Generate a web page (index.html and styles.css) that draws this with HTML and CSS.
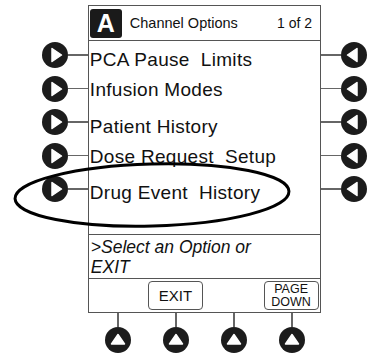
FILE: index.html
```html
<!DOCTYPE html>
<html lang="en">
<head>
    <meta charset="UTF-8">
    <title>Channel Options</title>
    <link rel="stylesheet" href="styles.css">
</head>
<body>
    <div class="device">
        <!-- linke Tasten -->
        <div class="side side-left">
            <div class="key"><svg class="btn" viewBox="0 0 26 26"><circle cx="13" cy="13" r="13"/><path d="M10 6.5 L19.5 13 L10 19.5 Z"/></svg><span class="stem"></span></div>
            <div class="key"><svg class="btn" viewBox="0 0 26 26"><circle cx="13" cy="13" r="13"/><path d="M10 6.5 L19.5 13 L10 19.5 Z"/></svg><span class="stem"></span></div>
            <div class="key"><svg class="btn" viewBox="0 0 26 26"><circle cx="13" cy="13" r="13"/><path d="M10 6.5 L19.5 13 L10 19.5 Z"/></svg><span class="stem"></span></div>
            <div class="key"><svg class="btn" viewBox="0 0 26 26"><circle cx="13" cy="13" r="13"/><path d="M10 6.5 L19.5 13 L10 19.5 Z"/></svg><span class="stem"></span></div>
            <div class="key"><svg class="btn" viewBox="0 0 26 26"><circle cx="13" cy="13" r="13"/><path d="M10 6.5 L19.5 13 L10 19.5 Z"/></svg><span class="stem"></span></div>
        </div>

        <!-- Display -->
        <div class="screen">
            <div class="header">
                <span class="badge">A</span>
                <span class="title">Channel Options</span>
                <span class="page">1 of 2</span>
            </div>
            <div class="menu">
                <div class="item">PCA Pause&nbsp; Limits</div>
                <div class="item">Infusion Modes</div>
                <div class="item">Patient History</div>
                <div class="item">Dose Request&nbsp; Setup</div>
                <div class="item">Drug Event&nbsp; History</div>
            </div>
            <div class="prompt">&gt;Select an Option or<br>EXIT</div>
            <div class="softkeys">
                <span></span>
                <span class="softkey">EXIT</span>
                <span></span>
                <span class="softkey small">PAGE<br>DOWN</span>
            </div>
        </div>

        <!-- rechte Tasten -->
        <div class="side side-right">
            <div class="key"><span class="stem"></span><svg class="btn" viewBox="0 0 26 26"><circle cx="13" cy="13" r="13"/><path d="M16 6.5 L6.5 13 L16 19.5 Z"/></svg></div>
            <div class="key"><span class="stem"></span><svg class="btn" viewBox="0 0 26 26"><circle cx="13" cy="13" r="13"/><path d="M16 6.5 L6.5 13 L16 19.5 Z"/></svg></div>
            <div class="key"><span class="stem"></span><svg class="btn" viewBox="0 0 26 26"><circle cx="13" cy="13" r="13"/><path d="M16 6.5 L6.5 13 L16 19.5 Z"/></svg></div>
            <div class="key"><span class="stem"></span><svg class="btn" viewBox="0 0 26 26"><circle cx="13" cy="13" r="13"/><path d="M16 6.5 L6.5 13 L16 19.5 Z"/></svg></div>
            <div class="key"><span class="stem"></span><svg class="btn" viewBox="0 0 26 26"><circle cx="13" cy="13" r="13"/><path d="M16 6.5 L6.5 13 L16 19.5 Z"/></svg></div>
        </div>
    </div>

    <!-- untere Tasten -->
    <div class="bottom-keys">
        <div class="bkey"><span class="vstem"></span><svg class="btn" viewBox="0 0 26 26"><circle cx="13" cy="13" r="13"/><path d="M6.5 17 L13 7.5 L19.5 17 Z"/></svg></div>
        <div class="bkey"><span class="vstem"></span><svg class="btn" viewBox="0 0 26 26"><circle cx="13" cy="13" r="13"/><path d="M6.5 17 L13 7.5 L19.5 17 Z"/></svg></div>
        <div class="bkey"><span class="vstem"></span><svg class="btn" viewBox="0 0 26 26"><circle cx="13" cy="13" r="13"/><path d="M6.5 17 L13 7.5 L19.5 17 Z"/></svg></div>
        <div class="bkey"><span class="vstem"></span><svg class="btn" viewBox="0 0 26 26"><circle cx="13" cy="13" r="13"/><path d="M6.5 17 L13 7.5 L19.5 17 Z"/></svg></div>
    </div>

    <!-- Markierung um "Drug Event History" -->
    <svg class="highlight" viewBox="0 0 367 360">
        <ellipse cx="152" cy="195" rx="137" ry="31" transform="rotate(-1.5 152 195)"/>
    </svg>
</body>
</html>
```

FILE: styles.css
```css
/* Allgemeine Stile */
* {
    margin: 0;
    padding: 0;
    box-sizing: border-box;
}

body {
    font-family: "Liberation Sans", Arial, sans-serif;
    background-color: #fff;
    color: #111;
    width: 367px;
    height: 360px;
    overflow: hidden;
    position: relative;
}

.device {
    display: flex;
    padding-top: 5px;
}

/* Seitentasten */
.side {
    display: flex;
    flex-direction: column;
    gap: 7.5px;
    padding-top: 37px;
}

.side-left {
    width: 88px;
    padding-left: 42px;
}

.side-right {
    width: 46px;
}

.key {
    display: flex;
    align-items: center;
    height: 26px;
}

.btn {
    width: 26px;
    height: 26px;
    flex: none;
    display: block;
}

.btn circle {
    fill: #1c1c1c;
}

.btn path {
    fill: #fff;
    stroke: #fff;
    stroke-width: 1.5;
    stroke-linejoin: round;
}

.stem {
    flex: 1;
    height: 1.5px;
    background-color: #666;
}

.side-right .stem {
    flex: none;
    width: 20px;
}

/* Display */
.screen {
    width: 234px;
    height: 308px;
    border: 1px solid #555;
    display: flex;
    flex-direction: column;
}

.header {
    height: 35px;
    border-bottom: 1px solid #555;
    display: flex;
    align-items: center;
    padding: 0 8px 0 1px;
}

.badge {
    width: 32px;
    height: 29px;
    background-color: #1a1a1a;
    border-radius: 3px;
    color: #fff;
    font-weight: bold;
    font-size: 25px;
    line-height: 29px;
    text-align: center;
}

.title {
    font-size: 14.5px;
    margin-left: 8px;
}

.page {
    font-size: 14px;
    margin-left: auto;
}

.menu {
    height: 193px;
    padding: 4px 0 0 1px;
}

.item {
    font-size: 19px;
    letter-spacing: 0.3px;
    line-height: 30px;
    white-space: nowrap;
}

/* Zeilen 2 und 4 haben auf dem Gerät etwas mehr Abstand */
.item:nth-child(even) {
    margin-bottom: 6.5px;
}

.prompt {
    height: 45px;
    border-top: 1px solid #555;
    border-bottom: 1px solid #555;
    padding: 2px 0 0 2px;
    font-size: 17.5px;
    font-style: italic;
    line-height: 20px;
}

.softkeys {
    flex: 1;
    display: grid;
    grid-template-columns: repeat(4, 1fr);
    align-items: start;
    padding-top: 2px;
}

.softkey {
    justify-self: center;
    width: 55px;
    height: 29px;
    border: 1px solid #555;
    border-radius: 4px;
    font-size: 15px;
    text-align: center;
    line-height: 28px;
}

.softkey.small {
    font-size: 12.5px;
    line-height: 13px;
    padding-top: 1px;
}

/* untere Tasten */
.bottom-keys {
    margin-left: 89px;
    width: 232px;
    display: grid;
    grid-template-columns: repeat(4, 1fr);
}

.bkey {
    display: flex;
    flex-direction: column;
    align-items: center;
}

.vstem {
    width: 1.5px;
    height: 14px;
    background-color: #666;
}

/* Ellipse liegt über dem Inhalt */
.highlight {
    position: absolute;
    top: 0;
    left: 0;
    width: 367px;
    height: 360px;
    pointer-events: none;
}

.highlight ellipse {
    fill: none;
    stroke: #000;
    stroke-width: 3;
}
```
